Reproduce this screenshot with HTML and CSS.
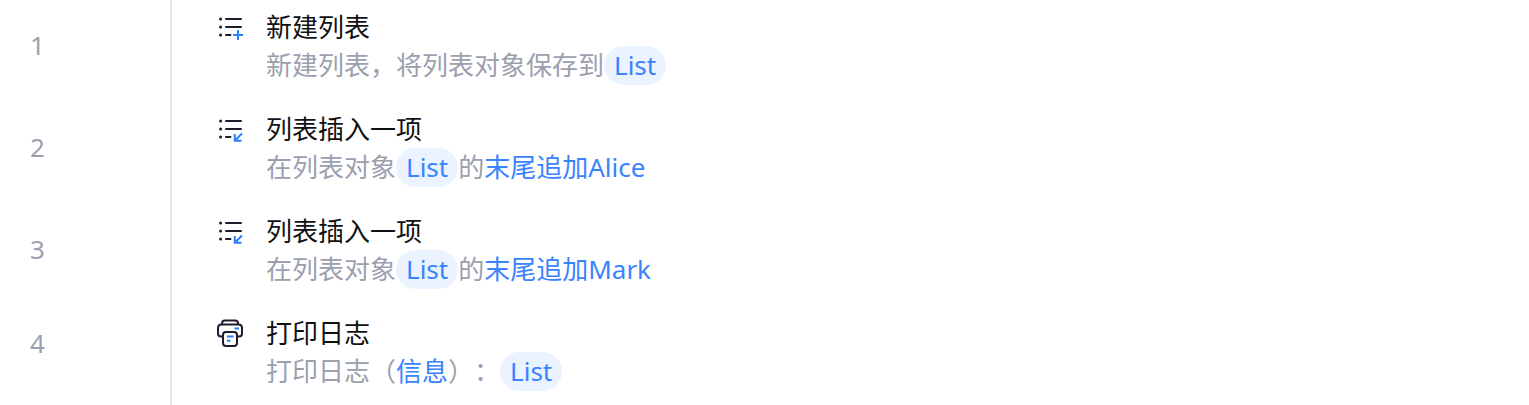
FILE: index.html
```html
<!DOCTYPE html>
<html lang="zh-CN">
<head>
<meta charset="utf-8">
<title>流程</title>
<link rel="stylesheet" href="styles.css">
</head>
<body>
<svg class="sprite" aria-hidden="true">
  <symbol id="list-base" viewBox="0 0 28 28">
    <g fill="#1f1b2d"><circle cx="4.6" cy="6" r="1.5"/><circle cx="4.6" cy="14" r="1.5"/><circle cx="4.6" cy="22" r="1.5"/></g>
    <path d="M10 6H25M10 14H25M10 22H14.5" fill="none" stroke="#1f1b2d" stroke-width="2" stroke-linecap="round"/>
  </symbol>
  <symbol id="list-add" viewBox="0 0 28 28">
    <use href="#list-base"/>
    <path d="M17 22H27M22 17V27" fill="none" stroke="#2b7fff" stroke-width="2"/>
  </symbol>
  <symbol id="list-insert" viewBox="0 0 28 28">
    <use href="#list-base"/>
    <path d="M26 18.5L19 25.500M18.800 19V25.800H25.500" fill="none" stroke="#2b7fff" stroke-width="2"/>
  </symbol>
  <symbol id="printer" viewBox="0 0 28 28">
    <g fill="none" stroke="#1f1b2d" stroke-width="2" stroke-linejoin="round">
      <path d="M6 5.5V4.5Q6 1.5 9 1.5H19Q22 1.5 22 4.5V5.5"/>
      <path d="M6.5 17.5H5Q2 17.5 2 14.5V9Q2 5.5 5.5 5.5H22.5Q26 5.5 26 9V14.5Q26 17.5 23 17.5H21.5"/>
      <rect x="7" y="13" width="14" height="14" rx="3"/>
    </g>
    <path d="M18.500 9.500H23M11 17.500H17.500M11 21.800H14.500" fill="none" stroke="#2b7fff" stroke-width="2"/>
  </symbol>
</svg>
<ol class="flow">
  <li class="step">
    <span class="number">1</span>
    <div class="content">
      <svg class="icon" aria-hidden="true"><use href="#list-add"/></svg>
      <div class="body">
        <div class="title">新建列表</div>
        <div class="desc">新建列表，将列表对象保存到<span class="pill">List</span></div>
      </div>
    </div>
  </li>
  <li class="step">
    <span class="number">2</span>
    <div class="content">
      <svg class="icon" aria-hidden="true"><use href="#list-insert"/></svg>
      <div class="body">
        <div class="title">列表插入一项</div>
        <div class="desc">在列表对象<span class="pill">List</span>的<span class="value">末尾追加Alice</span></div>
      </div>
    </div>
  </li>
  <li class="step">
    <span class="number">3</span>
    <div class="content">
      <svg class="icon" aria-hidden="true"><use href="#list-insert"/></svg>
      <div class="body">
        <div class="title">列表插入一项</div>
        <div class="desc">在列表对象<span class="pill">List</span>的<span class="value">末尾追加Mark</span></div>
      </div>
    </div>
  </li>
  <li class="step step-last">
    <span class="number">4</span>
    <div class="content">
      <svg class="icon" aria-hidden="true"><use href="#printer"/></svg>
      <div class="body">
        <div class="title">打印日志</div>
        <div class="desc">打印日志（<span class="value">信息</span>）：<span class="pill">List</span></div>
      </div>
    </div>
  </li>
</ol>
</body>
</html>
```
FILE: styles.css
```css
* {
  box-sizing: border-box;
}

body {
  margin: 0;
  background: #fff;
  color: #111;
  font-family: "Noto Sans", "Noto Sans CJK SC", sans-serif;
  font-size: 26px;
  line-height: 39px;
  text-spacing-trim: space-all;
}

.sprite {
  display: none;
}

.flow {
  margin: 0;
  padding: 0;
  list-style: none;
}

.step {
  display: grid;
  grid-template-columns: 170px 1fr;
}

.number {
  display: flex;
  align-items: center;
  padding: 8px 0 20px 30px;
  color: #9b9fae;
}

.content {
  display: flex;
  gap: 22px;
  padding: 8px 16px 17px 44px;
  border-left: 2px solid #e3e3e3;
}

.step-last .number {
  padding-bottom: 32px;
}

.step-last .content {
  padding-bottom: 14px;
}

.icon {
  flex: none;
  width: 28px;
  height: 28px;
  margin-top: 5px;
}

.title,
.desc {
  white-space: nowrap;
}

.title {
  line-height: 38px;
}

.desc {
  display: flex;
  color: #9b9fae;
}

.pill {
  padding: 0 10px;
  border-radius: 20px;
  background: #eaf3ff;
  color: #3b82ff;
}

.value {
  color: #3b82ff;
}
```
